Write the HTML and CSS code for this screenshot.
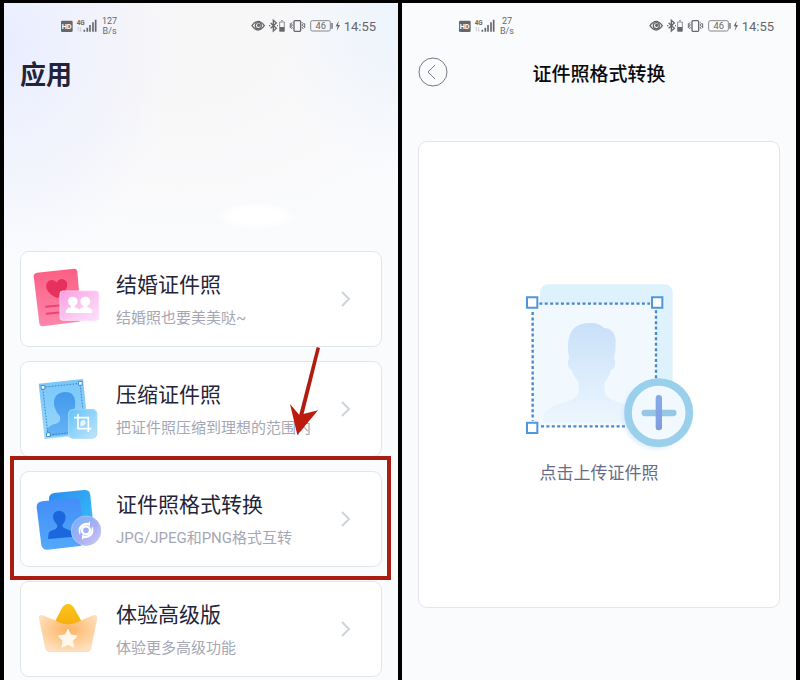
FILE: index.html
```html
<!DOCTYPE html>
<html lang="zh-CN">
<head>
<meta charset="utf-8">
<meta name="viewport" content="width=device-width, initial-scale=1">
<title>证件照应用</title>
<link rel="stylesheet" href="styles.css">
</head>
<body>
<svg class="defs" aria-hidden="true">
  <defs>
    <symbol id="network" viewBox="180 52 114 54">
      <rect x="183" y="63" width="35" height="34" rx="4" fill="#66676b"/>
      <text x="200" y="88" text-anchor="middle" font-size="22" font-weight="700" fill="#fff">HD</text>
      <text x="230" y="77" font-size="19" font-weight="700" fill="#66676b">4G</text>
      <path d="M235 83v12m-3-9l3-3 3 3M242 83v12m-3-3l3 3 3-3" stroke="#c0c1c6" stroke-width="2" fill="none"/>
      <path d="M253 90v6M262 84v12M270 76v20M279 68v28M287 60v36" stroke="#66676b" stroke-width="5" fill="none"/>
    </symbol>
    <symbol id="device" viewBox="63 52 270 54">
      <g fill="none" stroke="#66676b" stroke-width="4">
        <path d="M66 78q18-26 37 0q-19 26-37 0z"/>
        <circle cx="85" cy="78" r="9"/>
        <path d="M122 70l17 16-9 8V62l9 8-17 16"/>
        <path d="M117 78h4M141 78h3" stroke-width="4"/>
        <path d="M149 67h14v28h-14zM153 63h6" stroke="#8d8e93" stroke-width="3"/>
        <rect x="192" y="63" width="20" height="32" rx="3"/>
        <path d="M187 68l-3 4 3 4-3 4 3 4-3 4M181 71v14M217 68l3 4-3 4 3 4-3 4 3 4M224 71v14" stroke-width="3"/>
        <rect x="242" y="63" width="59" height="31" rx="5" stroke="#85868b" stroke-width="3"/>
      </g>
      <circle cx="86" cy="77" r="5" fill="#66676b"/>
      <path d="M149 82h14v13h-14zM304 70h4v17h-4zM326 63l-9 17h6l-3 14 10-18h-6z" fill="#66676b"/>
      <text x="272" y="88" text-anchor="middle" font-size="28" fill="#66676b">46</text>
    </symbol>
  </defs>
</svg>
<main class="screens">
  <section class="screen screen-apps">
    <div class="status">
      <svg class="network"><use href="#network"/></svg>
      <span class="speed"><span>127</span><span>B/s</span></span>
      <svg class="device"><use href="#device"/></svg>
      <time>14:55</time>
    </div>
    <h1>应用</h1>
    <nav class="cards">
      <a class="card" href="#wedding">
        <svg class="art" viewBox="60 33 288 288" aria-hidden="true">
          <defs>
            <linearGradient id="w1" x2="0" y2="1"><stop stop-color="#fb5f83"/><stop offset="1" stop-color="#fe86ab"/></linearGradient>
            <linearGradient id="w2" x2="1" y2="1"><stop stop-color="#fa9be0"/><stop offset=".45" stop-color="#fbc0ef"/><stop offset="1" stop-color="#fbe3fc"/></linearGradient>
          </defs>
          <path d="M111 98L223 86Q231 86 232 95L244 236Q244 244 236 245L128 259Q119 259 118 250L101 109Q101 100 111 98z" fill="url(#w1)"/>
          <path d="M172 174C140 160 132 139 143 126C152 116 165 120 170 128C174 115 190 113 198 123C209 139 194 163 172 174z" fill="#e8305f"/>
          <path d="M138 200l54-5M140 221l43-4" stroke="#e84573" stroke-width="6" stroke-linecap="round"/>
          <rect x="179" y="152" width="118" height="90" rx="10" fill="url(#w2)"/>
          <rect x="180" y="153" width="116" height="88" rx="9" fill="none" stroke="#fde0f8" stroke-width="2"/>
          <path d="M198 219V212Q200 205 213 202V199Q204 193 204 184Q205 170 218 170Q232 170 233 184Q233 193 224 199V202Q235 204 238 209Q240 204 250 202V199Q241 193 241 184Q242 170 256 170Q270 170 271 184Q271 193 262 199V202Q275 205 277 212V219z" fill="#fff"/>
        </svg>
        <span class="copy"><strong>结婚证件照</strong><small>结婚照也要美美哒~</small></span>
        <svg class="chevron" viewBox="0 0 10 18" aria-hidden="true"><path d="M1 2l7 7-7 7"/></svg>
      </a>
      <a class="card" href="#compress">
        <svg class="art" viewBox="30 33 288 288" aria-hidden="true">
          <defs>
            <linearGradient id="c1" x2="0" y2="1"><stop stop-color="#77c6fa"/><stop offset="1" stop-color="#9ad9fb"/></linearGradient>
            <linearGradient id="c2" x2="1" y2="1"><stop stop-color="#60c2fa"/><stop offset="1" stop-color="#c2e6fb"/></linearGradient>
            <linearGradient id="c3" x2="0" y2="1"><stop stop-color="#4398ed"/><stop offset="1" stop-color="#65b4f5"/></linearGradient>
          </defs>
          <path d="M86 101L219 87L236 253L104 267z" fill="url(#c1)"/>
          <path d="M114 260L110 238Q120 225 142 220Q152 216 150 199Q136 184 132 164Q129 132 158 127Q190 121 195 151Q197 173 190 190L200 205L226 218L228 250z" fill="url(#c3)"/>
          <path d="M98 112L210 100L226 243L114 255z" fill="none" stroke="#347bbb" stroke-width="2.500" stroke-dasharray="5 4"/>
          <path d="M93 107l11-1 1 11-11 1zM205 95l11-1 1 11-11 1zM109 249l11-1 1 11-11 1z" fill="#fff" stroke="#367fbd" stroke-width="2.500"/>
          <rect x="174" y="177" width="88" height="89" rx="15" fill="url(#c2)"/>
          <rect x="176" y="179" width="84" height="85" rx="13" fill="none" stroke="#a9dcfb" stroke-width="2"/>
          <path d="M192 203h43v43M204 192v44h40" fill="none" stroke="#fff" stroke-width="5"/>
          <path d="M211 229V219Q212 210 220 210Q228 211 227 220Q224 227 216 229z" fill="#e4f5ff"/>
        </svg>
        <span class="copy"><strong>压缩证件照</strong><small>把证件照压缩到理想的范围内</small></span>
        <svg class="chevron" viewBox="0 0 10 18" aria-hidden="true"><path d="M1 2l7 7-7 7"/></svg>
        <svg class="arrow" viewBox="84 45 102 273" aria-hidden="true">
          <path d="M170 51L180 54L128 263L116 261z" fill="#b01c10"/>
          <path d="M112 315L90 222L118 255L174 241z" fill="#bd1b0e"/>
        </svg>
      </a>
      <a class="card card-marked" href="#convert">
        <svg class="art" viewBox="60 63 288 288" aria-hidden="true">
          <defs>
            <linearGradient id="f1" x2="1" y2="1"><stop stop-color="#2b8cf0"/><stop offset="1" stop-color="#37c1f8"/></linearGradient>
            <linearGradient id="f2" x2="0" y2="1"><stop stop-color="#438df8"/><stop offset="1" stop-color="#53a9fb"/></linearGradient>
            <linearGradient id="f3" x2="1" y2="1"><stop stop-color="#6db3fa"/><stop offset=".55" stop-color="#a7aff3"/><stop offset="1" stop-color="#d6c7fa"/></linearGradient>
          </defs>
          <path d="M162 129L252 120Q269 119 271 136L279 216Q280 234 264 240L170 240L147 150Q145 132 162 129z" fill="url(#f1)"/>
          <path d="M126 154L221 144Q239 143 241 160L253 273Q253 285 240 288L143 299Q127 300 124 285L110 172Q109 157 126 154z" fill="url(#f2)"/>
          <path d="M144 267L146 250Q147 243 162 239Q174 235 171 224Q158 211 159 199Q161 183 177 182Q195 183 197 200Q197 214 187 224Q186 233 199 237L220 245L222 260z" fill="#1c67dd"/>
          <circle cx="258" cy="242" r="45" fill="url(#f3)"/>
          <circle cx="258" cy="242" r="44" fill="none" stroke="#b1c7fb" stroke-width="2"/>
          <circle cx="258" cy="241" r="12" fill="none" stroke="#fff" stroke-width="7"/>
          <path d="M240 256Q229 236 244 224Q253 217 265 219L270 213V229L262 225Q247 225 242 238zM276 228Q286 245 273 258Q263 266 252 264L246 270V254L255 258Q270 257 274 243z" fill="#fff"/>
        </svg>
        <span class="copy"><strong>证件照格式转换</strong><small>JPG/JPEG和PNG格式互转</small></span>
        <svg class="chevron" viewBox="0 0 10 18" aria-hidden="true"><path d="M1 2l7 7-7 7"/></svg>
      </a>
      <a class="card" href="#premium">
        <svg class="art" viewBox="30 33 288 288" aria-hidden="true">
          <defs>
            <linearGradient id="p1" x2="0" y2="1"><stop stop-color="#fac51a"/><stop offset="1" stop-color="#f7a90b"/></linearGradient>
            <radialGradient id="p2" cy=".4" r=".6"><stop stop-color="#fcb265"/><stop offset=".5" stop-color="#fdca8e"/><stop offset="1" stop-color="#fee0c0"/></radialGradient>
          </defs>
          <path d="M134 156L158 110Q174 92 190 110L216 156L192 180H158z" fill="url(#p1)"/>
          <path d="M87 145Q85 132 98 136L135 151Q155 164 175 163Q195 163 214 151L249 136Q263 132 262 145L244 233Q242 246 228 246H122Q108 246 105 233z" fill="url(#p2)"/>
          <path d="M106 228Q109 245 123 245H227Q241 245 243 230" fill="none" stroke="#eedfcf" stroke-width="2"/>
          <path d="M174 178l8 17 20 3-14 14 3 20-17-9-18 9 3-20-14-14 20-3z" fill="#fff7eb" stroke="#fff7eb" stroke-width="3" stroke-linejoin="round"/>
        </svg>
        <span class="copy"><strong>体验高级版</strong><small>体验更多高级功能</small></span>
        <svg class="chevron" viewBox="0 0 10 18" aria-hidden="true"><path d="M1 2l7 7-7 7"/></svg>
      </a>
    </nav>
  </section>

  <section class="screen">
    <div class="status">
      <svg class="network"><use href="#network"/></svg>
      <span class="speed"><span>27</span><span>B/s</span></span>
      <svg class="device"><use href="#device"/></svg>
      <time>14:55</time>
    </div>
    <header class="bar">
      <button class="back" type="button" aria-label="返回">
        <svg viewBox="0 0 30 30" aria-hidden="true"><circle cx="15" cy="15" r="14"/><path d="M17 8l-7 7 7 7"/></svg>
      </button>
      <h2>证件照格式转换</h2>
    </header>
    <button class="upload" type="button">
      <svg viewBox="3 33 588 516" aria-hidden="true">
        <defs>
          <linearGradient id="u1" x2="0" y2="1"><stop stop-color="#c8e0f8"/><stop offset=".7" stop-color="#e2f0fd"/><stop offset="1" stop-color="#edf6fe"/></linearGradient>
          <linearGradient id="u2" x2="0" y2="1"><stop stop-color="#84abeb"/><stop offset="1" stop-color="#829cdc"/></linearGradient>
          <filter id="u3" x="-30%" y="-30%" width="160%" height="160%"><feGaussianBlur stdDeviation="8"/></filter>
        </defs>
        <rect x="120" y="43" width="398" height="400" rx="24" fill="#def2fd"/>
        <rect x="97" y="100" width="371" height="369" fill="#f1f8fe"/>
        <path d="M130 458V432Q145 408 198 396Q238 384 236 364V335Q218 316 215 299Q203 296 204 276Q204 267 208 266Q200 229 207 203Q217 160 268 159Q297 157 312 174Q342 174 347 210Q348 239 342 267Q347 270 345 286Q342 299 333 299Q326 323 314 337V362Q313 384 352 395L400 410V458z" fill="url(#u1)"/>
        <g fill="none" stroke="#4a88c8" stroke-width="7" stroke-dasharray="9 7.200">
          <path d="M118 101H450M98 126V452M468 121V340M123 469H400"/>
        </g>
        <g fill="#fff" stroke="#4f97dc" stroke-width="6">
          <path d="M81 82h31v31H81zM456 82h31v31h-31zM81 458h31v31H81z"/>
        </g>
        <circle cx="468" cy="437" r="98" fill="#b9d5ff" opacity=".55" filter="url(#u3)"/>
        <circle cx="476" cy="428" r="92" fill="#f2f9fe" stroke="#9bd0ec" stroke-width="23"/>
        <path d="M434 429h86" stroke="#96c7e8" stroke-width="19" stroke-linecap="round"/>
        <rect x="467" y="375" width="19" height="106" rx="9" fill="url(#u2)"/>
      </svg>
      <span>点击上传证件照</span>
    </button>
  </section>
</main>
</body>
</html>
```
FILE: styles.css
```css
* {
  box-sizing: border-box;
}

body {
  margin: 0;
  background: #000;
  color: #23243a;
  font-family: Roboto, "Noto Sans CJK SC", sans-serif;
}

.defs {
  position: absolute;
  width: 0;
  height: 0;
}

.screens {
  display: grid;
  grid-template-columns: 1fr 1fr;
  gap: 4px;
  min-height: 100vh;
  padding: 3px 4px 0;
}

.screen {
  display: flex;
  flex-direction: column;
  min-width: 0;
  padding: 0 16px;
  background: #fafbfd;
}

.screen-apps {
  padding-bottom: 3px;
  background:
    radial-gradient(ellipse 40px 14px at 64% 213px, #fff 60%, transparent),
    radial-gradient(ellipse 170px 220px at 0 40px, #e9edff, transparent),
    radial-gradient(ellipse 120px 150px at 100% 20px, #edf4fc, transparent),
    radial-gradient(ellipse 300px 240px at 45% 20px, #f8f7f8 30%, transparent),
    #fafbfd;
}

.status {
  display: flex;
  align-items: center;
  height: 46px;
  padding: 0 6px 0 40px;
  color: #66676b;
}

.network {
  width: 38px;
  height: 18px;
}

.speed {
  display: flex;
  flex-direction: column;
  align-items: center;
  margin-left: 4px;
  font-size: 9px;
  line-height: 10px;
}

.device {
  width: 90px;
  height: 18px;
  margin-left: auto;
}

time {
  margin-left: 3px;
  font-size: 13px;
}

h1,
h2 {
  margin: 0;
}

h1 {
  height: 52px;
  font-size: 26px;
  font-weight: 700;
  line-height: 52px;
}

.cards {
  display: grid;
  gap: 14px;
  margin-top: 150px;
}

.card {
  position: relative;
  display: flex;
  align-items: center;
  height: 96px;
  border: 1px solid #e2e6ea;
  border-radius: 9px;
  background: #fff;
  color: inherit;
  text-decoration: none;
}

.art {
  flex: none;
  width: 96px;
  height: 96px;
  margin-left: -1px;
}

.copy {
  display: flex;
  flex: 1;
  flex-direction: column;
  align-self: flex-start;
  padding-top: 16px;
  white-space: nowrap;
}

.copy strong {
  font-size: 21px;
  font-weight: 400;
  line-height: 34px;
}

.copy small {
  color: #a5a7b4;
  font-size: 15px;
  line-height: 32px;
}

.chevron {
  width: 10px;
  height: 18px;
  margin-right: 30px;
  fill: none;
  stroke: #cdd5da;
  stroke-width: 2;
}

.card-marked::after {
  position: absolute;
  inset: -16px -10px -14px -11px;
  border: 4px solid #a81c12;
  content: "";
}

.arrow {
  position: absolute;
  z-index: 1;
  top: -17px;
  right: 59px;
  width: 34px;
  height: 91px;
}

.bar {
  display: grid;
  grid-template-columns: 30px 1fr 30px;
  align-items: center;
  height: 46px;
}

.bar h2 {
  color: #08090d;
  font-size: 19px;
  font-weight: 500;
  text-align: center;
}

.back {
  padding: 0;
  border: 0;
  background: none;
}

.back svg {
  display: block;
  width: 30px;
  height: 30px;
  fill: none;
  stroke: #777986;
}

.upload {
  display: flex;
  flex: 1;
  flex-direction: column;
  align-items: center;
  justify-content: center;
  margin: 46px 0 72px;
  padding: 17px 0 0;
  border: 1px solid #e2e6ea;
  border-radius: 9px;
  background: #fff;
  color: #686b83;
  font: inherit;
  font-size: 17px;
  line-height: 24px;
}

.upload svg {
  width: 196px;
  height: 172px;
  margin-bottom: 8px;
}
```
